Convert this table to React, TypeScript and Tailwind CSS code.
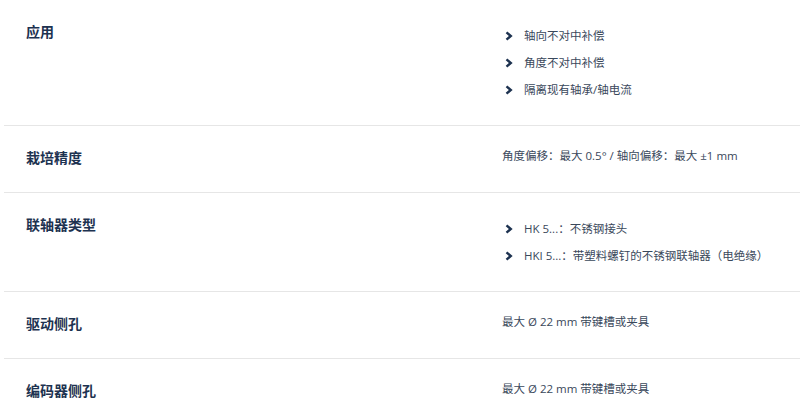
const rows: { label: string; items?: string[]; value?: string }[] = [
  { label: "应用", items: ["轴向不对中补偿", "角度不对中补偿", "隔离现有轴承/轴电流"] },
  { label: "栽培精度", value: "角度偏移：最大 0.5° / 轴向偏移：最大 ±1 mm" },
  { label: "联轴器类型", items: ["HK 5...：不锈钢接头", "HKI 5...：带塑料螺钉的不锈钢联轴器（电绝缘）"] },
  { label: "驱动侧孔", value: "最大 Ø 22 mm 带键槽或夹具" },
  { label: "编码器侧孔", value: "最大 Ø 22 mm 带键槽或夹具" },
]

function Chevron() {
  return (
    <svg width="8" height="10" viewBox="0 0 8 10" className="shrink-0">
      <path d="M1.5 1.3 L5.8 5 L1.5 8.7" fill="none" stroke="#1d3250" strokeWidth="2.4" />
    </svg>
  )
}

export default function App() {
  return (
    <div
      className="w-[800px] bg-white pl-[4px]"
      style={{ fontFamily: '"Open Sans", "Noto Sans CJK SC", sans-serif' }}
    >
      {rows.map((row, i) => (
        <div
          key={i}
          className={`flex items-start border-b border-[#e6e6e6] pl-[22px] pt-[22px] ${row.items ? "pb-[25px]" : "pb-[24px]"}`}
        >
          <div className="w-[476px] shrink-0 text-[14px] font-bold leading-[20px] text-[#1d3250]">
            {row.label}
          </div>
          {row.items ? (
            <ul className="mt-[4px] flex flex-col gap-[7px] text-[11.5px] leading-[20px] text-[#3a485b]">
              {row.items.map((item, j) => (
                <li key={j} className="flex items-center">
                  <span className="ml-[3px] mr-[11px] flex">
                    <Chevron />
                  </span>
                  {item}
                </li>
              ))}
            </ul>
          ) : (
            <div className="text-[11.5px] leading-[16px] text-[#3a485b]">{row.value}</div>
          )}
        </div>
      ))}
    </div>
  )
}
